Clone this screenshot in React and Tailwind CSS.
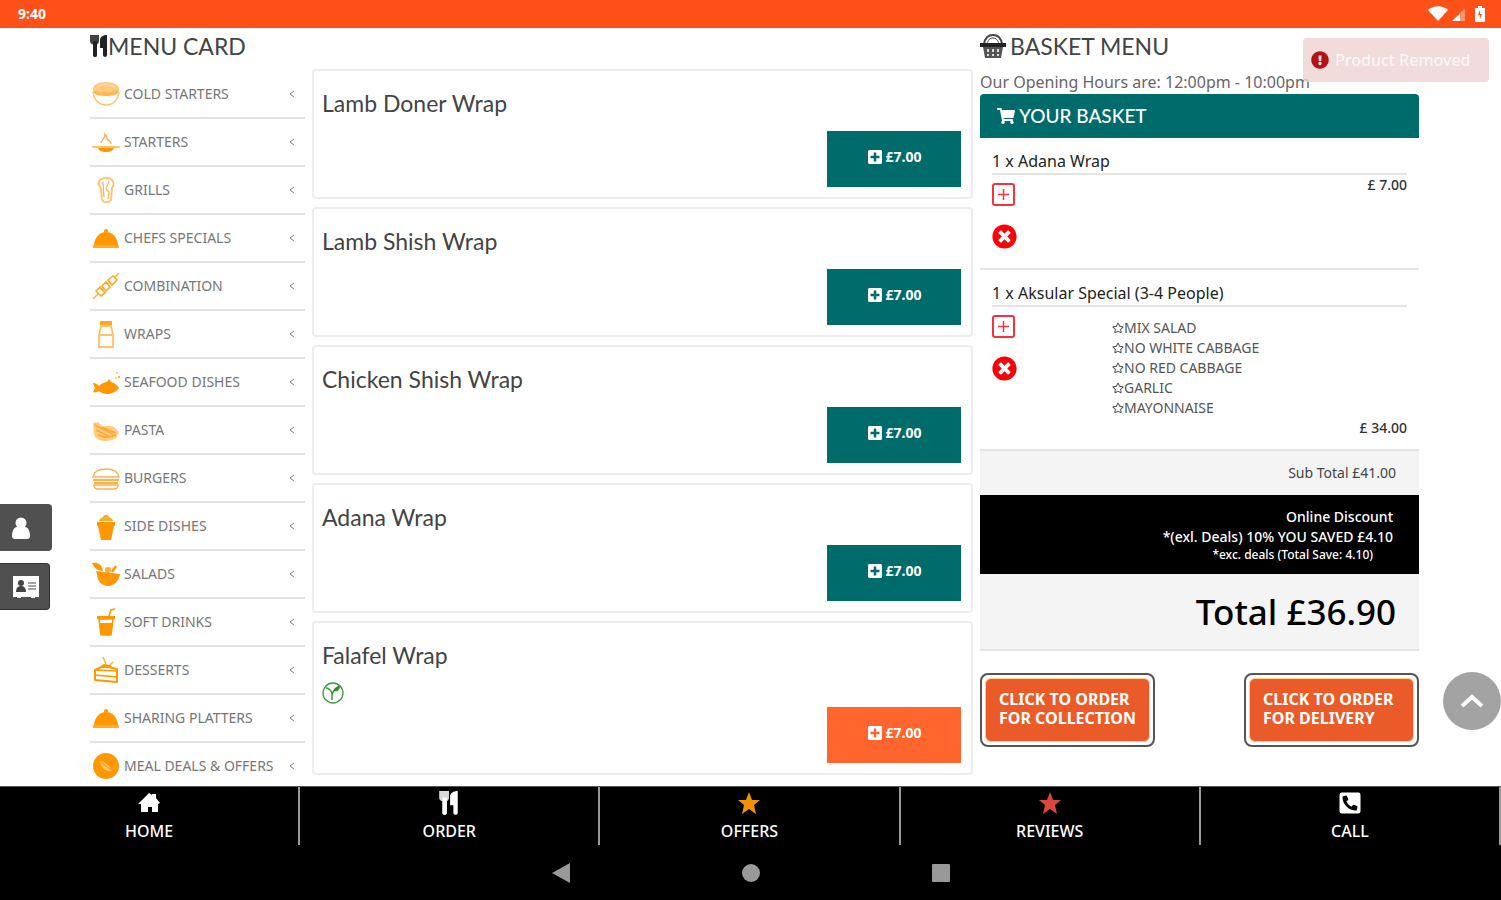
import { useState } from "react";
import {
    FaShoppingCart,
    FaPlusSquare,
    FaTimesCircle,
    FaRegStar,
    FaPhoneSquareAlt,
    FaExclamationCircle
} from "react-icons/fa";

const ORANGE = "#ff9800";
const PALE = "#ffc266";

const foodIcons = {
    bowl: (
        <>
            <path d="M1 9c0-4 5-7 13-7s13 3 13 7v3c-2 4-24 4-26 0z" fill="#ffc980" />
            <path d="M2 10c4 3 20 3 24 0v3c-3 4-21 4-24 0z" fill="#ffb64d" />
            <path d="M1 12c1 8 6 13 13 13s12-5 13-13" fill="none" stroke={PALE} strokeWidth="1.4" />
            <path d="M5 7c4-3 14-3 18 0" fill="none" stroke="#ffe0b3" />
        </>
    ),
    soup: (
        <>
            <path d="M1 19h26" stroke={PALE} strokeWidth="2" strokeLinecap="round" />
            <path d="M6 20h16c-1 3-4 4-8 4s-7-1-8-4z" fill={ORANGE} />
            <path d="M9 15c1-4 4-4 4-9 3 3 1 5 3 6s3 1 3 4" fill="none" stroke="#ffb04d" strokeWidth="1.4" />
        </>
    ),
    grill: (
        <>
            <path d="M8 4c3-3 9-3 12 0 2 2 2 5 0 8l-1 12c-2 3-7 3-9 0L9 12C6 9 6 6 8 4z" fill="none" stroke={PALE} strokeWidth="1.8" />
            <path d="M11 6l1 15M17 5l-3 8 3 3-1 7" fill="none" stroke="#ffb04d" strokeWidth="1.2" />
        </>
    ),
    cloche: (
        <>
            <circle cx="14" cy="7" r="2" fill={ORANGE} />
            <path d="M2 21C3 12 8 8 14 8s11 4 12 13z" fill={ORANGE} />
            <path d="M1 21h26v3H1z" fill="#ffab2e" />
        </>
    ),
    kebab: (
        <>
            <path d="M1 27L27 1" stroke="#ffb04d" strokeWidth="1.4" />
            <path d="M4 19l5 5 4-3-5-6zM10 14l4 5 4-4-4-5zM16 8l4 5 5-5-4-4z" fill="#fff" stroke="#ffa726" strokeWidth="1.6" />
        </>
    ),
    shaker: (
        <>
            <path d="M8 1h12v4H8z" fill="#ffa726" />
            <path d="M9 6h10l2 9v12H7V15z" fill="none" stroke={PALE} strokeWidth="1.8" />
            <path d="M8 15h12" stroke={PALE} strokeWidth="2" />
        </>
    ),
    fish: (
        <>
            <path d="M1 15c3 0 5 2 6 3 3-3 6-4 8-4l2-3 2 3c4 1 7 4 8 6-3 4-8 6-12 6-3 0-6-1-8-3-2 1-4 2-6 1l2-4z" fill={ORANGE} />
            <circle cx="25" cy="5" r="1" fill={PALE} />
            <circle cx="27" cy="9" r="1" fill={ORANGE} />
            <circle cx="24" cy="10" r="1" fill={PALE} />
        </>
    ),
    pasta: (
        <>
            <path d="M1 7l5-1 5 5c7-3 13 0 16 6l-3 5c-6 4-16 4-20 0-3-3-2-7-3-15z" fill="#ffcc80" />
            <path d="M3 9l18 9M4 14l14 7M10 11l14 6M6 19c6 3 12 3 18 0" fill="none" stroke="#ffa733" strokeWidth="1.5" />
        </>
    ),
    burger: (
        <g fill="none" stroke="#ffb04d" strokeWidth="1.5">
            <path d="M1 13c1-6 6-8 13-8s12 2 13 8z" />
            <path d="M1 16h26M2 19h24" strokeWidth="2" />
            <path d="M2 21h24c0 3-2 4-4 4H6c-2 0-4-1-4-4z" />
        </g>
    ),
    cupcake: (
        <>
            <path d="M7 9c0-2 2-3 4-4 1-3 5-3 6 0 2 1 4 2 4 4z" fill="#ffab2e" />
            <path d="M5 10h18v4h-1l-3 14H9L6 14H5z" fill={ORANGE} />
        </>
    ),
    salad: (
        <>
            <path d="M0 3c5-1 10 1 11 8-5 0-9-3-11-8z" fill={ORANGE} />
            <circle cx="16" cy="10" r="3" fill="#ffab2e" />
            <path d="M20 12l4-6" stroke={ORANGE} strokeWidth="2.5" />
            <path d="M4 11l24 3c-1 7-6 12-12 12S5 21 5 14z" fill={ORANGE} />
        </>
    ),
    drink: (
        <>
            <path d="M17 8l2-6 4-1" fill="none" stroke={ORANGE} strokeWidth="1.6" />
            <path d="M5 8h18v3H5z" fill={ORANGE} />
            <path d="M7 11h14l-2 16H9z" fill="#fff" stroke={ORANGE} strokeWidth="1.6" />
            <path d="M7 15h14l-2 12H9z" fill={ORANGE} />
        </>
    ),
    cake: (
        <>
            <path d="M3 14l9-4 13 3v13L3 24z" fill="#fff" stroke={ORANGE} strokeWidth="2" strokeLinejoin="round" />
            <path d="M3 14l22 1M3 19l22 2" stroke={ORANGE} strokeWidth="1.6" />
            <path d="M9 12c0-4 4-5 7-3 2-1 4 1 4 3z" fill={ORANGE} />
            <path d="M14 8l-3-7M18 9l3-3" stroke="#ffab2e" strokeWidth="1.4" />
        </>
    ),
    deals: (
        <>
            <circle cx="14" cy="14" r="13" fill={ORANGE} />
            <path d="M8 9c5 0 9 4 12 10-6 1-11-3-12-10z" fill={PALE} />
            <path d="M9 10l10 8" stroke={ORANGE} />
        </>
    )
};

const categories = [
    { name: "COLD STARTERS", icon: "bowl" },
    { name: "STARTERS", icon: "soup" },
    { name: "GRILLS", icon: "grill" },
    { name: "CHEFS SPECIALS", icon: "cloche" },
    { name: "COMBINATION", icon: "kebab" },
    { name: "WRAPS", icon: "shaker" },
    { name: "SEAFOOD DISHES", icon: "fish" },
    { name: "PASTA", icon: "pasta" },
    { name: "BURGERS", icon: "burger" },
    { name: "SIDE DISHES", icon: "cupcake" },
    { name: "SALADS", icon: "salad" },
    { name: "SOFT DRINKS", icon: "drink" },
    { name: "DESSERTS", icon: "cake" },
    { name: "SHARING PLATTERS", icon: "cloche" },
    { name: "MEAL DEALS & OFFERS", icon: "deals" }
];

const products = [
    { name: "Lamb Doner Wrap", price: "7.00" },
    { name: "Lamb Shish Wrap", price: "7.00" },
    { name: "Chicken Shish Wrap", price: "7.00" },
    { name: "Adana Wrap", price: "7.00" },
    { name: "Falafel Wrap", price: "7.00", vegetarian: true, active: true }
];

const basket = [
    { name: "Adana Wrap", qty: 1, price: "7.00", extras: [] },
    {
        name: "Aksular Special (3-4 People)",
        qty: 1,
        price: "34.00",
        extras: ["MIX SALAD", "NO WHITE CABBAGE", "NO RED CABBAGE", "GARLIC", "MAYONNAISE"]
    }
];

function Cutlery({ className }) {
    return (
        <svg className={className} viewBox="0 0 18 22" fill="currentColor" aria-hidden="true">
            <path d="M0 0h9v6c0 2-1 3-2 3.500V20c0 2.500-4 2.500-4 0V9.500C1 9 0 8 0 6z" opacity=".85" />
            <path d="M3 6h4v14c0 2.500-4 2.500-4 0z" />
            <path d="M17 0v20c0 2.500-4 2.500-4 0v-7h-3V5c0-3 3-5 7-5z" />
        </svg>
    );
}

function BasketIcon() {
    return (
        <svg className="h-6 w-[26px]" viewBox="0 0 26 24" fill="none" stroke="#444" aria-hidden="true">
            <path d="M4 10C5 4 8 1 13 1s8 3 9 9" strokeWidth="2" />
            <path d="M7 10c1-4 3-6 6-6s5 2 6 6" strokeWidth="1" />
            <path d="M0 9h26v4H0z" fill="#222" stroke="none" />
            <path d="M3 13h20l-2 11H5z" fill="#555" stroke="none" />
            <path d="M8 15v3M8 20v2M13 15v3M13 20v2M18 15v3M18 20v2" stroke="#ddd" strokeWidth="2" />
        </svg>
    );
}

function Star({ className }) {
    return (
        <svg className={className} viewBox="0 0 22 22" fill="currentColor" aria-hidden="true">
            <path d="M11 0l3 8h8l-6 5 2 9-7-5-7 5 2-9-6-5h8z" />
        </svg>
    );
}

function House({ className }) {
    return (
        <svg className={className} viewBox="0 0 22 20" fill="currentColor" aria-hidden="true">
            <path d="M11 0l3 2V1h4v4l4 5-2 1v8h-6v-5h-4v5H3v-8H0z" />
        </svg>
    );
}

function StatusBar() {
    return (
        <header className="flex h-7 shrink-0 items-center justify-between bg-[#ff5018] pr-[15px] pl-[18px] text-white">
            <span className="text-sm font-bold">9:40</span>
            <div className="flex items-center gap-1">
                <svg className="h-4 w-5" viewBox="0 0 20 16" fill="currentColor">
                    <path d="M0 4c6-5 14-5 20 0L10 15z" />
                </svg>
                <svg className="h-4 w-3.5" viewBox="0 0 14 16" fill="currentColor">
                    <path d="M13 2v13H0z" opacity=".4" />
                    <path d="M8 8v7H0z" />
                </svg>
                <svg className="ml-1 h-4 w-3" viewBox="0 0 12 16" fill="currentColor">
                    <path d="M4 0h4v2h3v14H1V2h3z" />
                    <path d="M6 4L4 9h2v4l2-5H6z" fill="#ff5018" />
                </svg>
            </div>
        </header>
    );
}

function CategoryList() {
    return (
        <ul className="mt-[7px]">
            {categories.map((category) => (
                <li key={category.name} className="h-12 border-b-2 border-[#e2e2e2] last:border-0">
                    <a href="#" className="flex h-[46px] items-center gap-1 pr-2.5 pl-0.5 text-sm text-[#777]">
                        <svg className="size-7 shrink-0" viewBox="0 0 28 28" aria-hidden="true">
                            {foodIcons[category.icon]}
                        </svg>
                        <span className="flex-1 whitespace-nowrap">{category.name}</span>
                        <svg className="h-2 w-1.5" viewBox="0 0 6 8" fill="none" stroke="#888">
                            <path d="M5 1L1 4l4 3" />
                        </svg>
                    </a>
                </li>
            ))}
        </ul>
    );
}

function ProductCard({ product }) {
    return (
        <article
            className={`flex flex-col rounded border-2 border-[#ededed] pt-[17px] pr-2.5 pb-2.5 pl-2 ${
                product.vegetarian ? "min-h-[154px]" : "min-h-[130px]"
            }`}
        >
            <h2 className="font-['Lato'] text-[23px] leading-[30px] text-[#444]">{product.name}</h2>
            {product.vegetarian && (
                <svg className="mt-3 size-[22px]" viewBox="0 0 22 22" fill="none" stroke="#3c9a3c" aria-label="Vegetarian">
                    <circle cx="11" cy="11" r="10" strokeWidth="1.3" />
                    <path d="M4 6c3 0 6 3 6 7v5M10 13c1-4 3-7 7-8" strokeWidth="1.5" />
                    <path d="M12 9c0-3 3-5 6-5 0 4-3 6-6 5z" fill="#2e8b2e" stroke="none" />
                </svg>
            )}
            <button
                className={`mt-auto flex h-14 w-[134px] items-center justify-center gap-[3px] self-end pb-1 text-sm font-bold text-white ${
                    product.active ? "bg-[#ff652d]" : "bg-[#006b6b]"
                }`}
            >
                <FaPlusSquare className="size-4" />£{product.price}
            </button>
        </article>
    );
}

function BasketItem({ item }) {
    return (
        <li className="border-b-2 border-[#e4e4e4] px-3 pt-[11px]">
            <h3 className="border-b-2 border-[#e4e4e4] text-base leading-6 text-[#222]">
                {item.qty} x {item.name}
            </h3>
            <div className="flex">
                <div className="flex w-[120px] flex-col items-start gap-[18px] pt-2 pb-[19px]">
                    <button aria-label="Add one" className="size-[23px]">
                        <svg viewBox="0 0 23 23" fill="none" stroke="#f5333f">
                            <rect x="1" y="1" width="21" height="21" rx="2" strokeWidth="2" />
                            <path d="M11.500 6v11M6 11.500h11" strokeWidth="1.5" />
                        </svg>
                    </button>
                    <button aria-label="Remove" className="text-[#fb0007]">
                        <FaTimesCircle className="size-[25px]" />
                    </button>
                </div>
                <div className="flex-1 text-sm leading-5 text-[#333]">
                    {item.extras.length > 0 && (
                        <ul className="pt-[11px] text-[#555]">
                            {item.extras.map((extra) => (
                                <li key={extra} className="flex items-center">
                                    <FaRegStar className="size-3" />
                                    {extra}
                                </li>
                            ))}
                        </ul>
                    )}
                    <p className="pb-[11px] text-right font-medium">£ {item.price}</p>
                </div>
            </div>
        </li>
    );
}

function OrderButton({ type }) {
    return (
        <button className="w-[175px] rounded-lg border-2 border-[#555] bg-white p-[3px] text-left">
            <span className="block rounded-md border border-[#ffd08a] bg-[#eb5b2a] px-[13px] pt-[11px] pb-[13px] text-base leading-[19px] font-bold whitespace-nowrap text-white">
                CLICK TO ORDER
                <br />
                FOR {type}
            </span>
        </button>
    );
}

function Basket() {
    return (
        <>
            <p className="mt-1.5 text-base leading-6 whitespace-nowrap text-[#666]">
                Our Opening Hours are: 12:00pm - 10:00pm
            </p>
            <h2 className="flex h-11 items-center gap-1 rounded-t bg-[#006b6b] px-[17px] font-['Lato'] text-[19px] font-medium text-white">
                <FaShoppingCart className="size-[18px]" />
                YOUR BASKET
            </h2>
            <ul>
                {basket.map((item) => (
                    <BasketItem key={item.name} item={item} />
                ))}
            </ul>
            <p className="bg-[#f4f4f4] px-[23px] text-right text-sm leading-[44px] text-[#444]">Sub Total £41.00</p>
            <div className="bg-black px-[26px] pt-3 pb-[11px] text-right text-sm leading-5 font-medium text-white">
                <p>Online Discount</p>
                <p>*(exl. Deals) 10% YOU SAVED £4.10</p>
                <p className="pr-5 text-xs leading-4">*exc. deals (Total Save: 4.10)</p>
            </div>
            <p className="border-b-2 border-[#e4e4e4] bg-[#f4f4f4] px-[23px] text-right text-[35px] leading-[75px] font-medium text-black">
                Total £36.90
            </p>
            <div className="mt-[22px] flex justify-between">
                <OrderButton type="COLLECTION" />
                <OrderButton type="DELIVERY" />
            </div>
        </>
    );
}

const navItems = [
    { label: "HOME", icon: <House className="h-5 w-[22px]" /> },
    { label: "ORDER", icon: <Cutlery className="h-6 w-5" /> },
    { label: "OFFERS", icon: <Star className="size-[22px] text-[#f39200]" /> },
    { label: "REVIEWS", icon: <Star className="size-[22px] text-[#d9483b]" /> },
    { label: "CALL", icon: <FaPhoneSquareAlt className="size-6" /> }
];

function BottomNav() {
    return (
        <nav className="grid h-[59px] shrink-0 grid-cols-5 border-t border-[#555] bg-black">
            {navItems.map((item) => (
                <a
                    key={item.label}
                    href="#"
                    className="flex flex-col items-center border-r-2 border-[#999] pt-1 text-base font-medium text-white"
                >
                    <span className="flex h-6 items-center">{item.icon}</span>
                    <span className="mt-1 leading-6">{item.label}</span>
                </a>
            ))}
        </nav>
    );
}

function SystemBar() {
    return (
        <div className="flex h-[55px] shrink-0 items-center justify-center gap-[170px] bg-black">
            <button aria-label="Back">
                <svg className="size-5" viewBox="0 0 20 20" fill="#999">
                    <path d="M1 10L19 0v20z" />
                </svg>
            </button>
            <button aria-label="Home" className="flex size-5 items-center justify-center">
                <span className="size-[18px] rounded-full bg-[#999]" />
            </button>
            <button aria-label="Recent apps" className="flex size-5 items-center justify-center">
                <span className="size-[18px] rounded-[1px] bg-[#999]" />
            </button>
        </div>
    );
}

function App() {
    const [toast] = useState("Product Removed");

    return (
        <div className="relative flex h-screen flex-col bg-white font-['Noto_Sans',sans-serif]">
            <StatusBar />

            <main className="grid min-h-0 flex-1 grid-cols-[215fr_661fr_439fr] gap-[7px] overflow-y-auto pr-[82px] pl-[90px] [scrollbar-width:none]">
                <aside className="min-w-0">
                    <h1 className="flex h-9 items-center font-['Lato'] text-[23px] text-[#444]">
                        <Cutlery className="h-[22px] w-[18px] text-[#222]" />
                        MENU CARD
                    </h1>
                    <CategoryList />
                </aside>

                <section className="flex min-w-0 flex-col gap-2 pt-[41px]">
                    {products.map((product) => (
                        <ProductCard key={product.name} product={product} />
                    ))}
                </section>

                <section className="min-w-0">
                    <h1 className="flex h-9 items-center gap-1 font-['Lato'] text-[23px] text-[#444]">
                        <BasketIcon />
                        BASKET MENU
                    </h1>
                    <Basket />
                </section>
            </main>

            <BottomNav />
            <SystemBar />

            {toast && (
                <div
                    role="alert"
                    className="absolute top-[38px] right-3 flex h-11 w-[186px] items-center gap-1.5 rounded bg-[#efd5d5]/85 px-2 text-base font-medium whitespace-nowrap text-[#fdf6f6]"
                >
                    <FaExclamationCircle className="size-[18px] shrink-0 text-[#b31217]" />
                    {toast}
                </div>
            )}

            <div className="absolute bottom-[290px] left-0 flex flex-col gap-3">
                <button
                    aria-label="My account"
                    className="flex h-[47px] w-[52px] items-center rounded-r bg-[#505050] pl-3 text-white"
                >
                    <svg className="h-[22px] w-[18px]" viewBox="0 0 18 22" fill="currentColor">
                        <circle cx="9" cy="6" r="5.5" />
                        <path d="M0 19c0-5 2-9 5-9h8c3 0 5 4 5 9 0 2-1 3-3 3H3c-2 0-3-1-3-3z" />
                    </svg>
                </button>
                <button
                    aria-label="Contact details"
                    className="flex h-[47px] w-[50px] items-center rounded-r border border-l-0 border-[#333] bg-[#505050] pl-3 text-white"
                >
                    <svg className="h-[22px] w-7" viewBox="0 0 28 22">
                        <path d="M1 0h26v21h-4v1h-4v-1H9v1H5v-1H1z" fill="#fff" />
                        <circle cx="9" cy="7" r="3" fill="#444" />
                        <path d="M4 16c0-4 2-6 5-6s5 2 5 6z" fill="#444" />
                        <path d="M16 7h8M16 10h8M16 13h8" stroke="#888" strokeWidth="1.5" />
                    </svg>
                </button>
            </div>

            <button
                aria-label="Back to top"
                className="absolute right-0 bottom-[170px] flex size-[58px] items-center justify-center rounded-full bg-[#a3a3a3]"
            >
                <svg className="h-4 w-6" viewBox="0 0 24 16" fill="none" stroke="#fff" strokeWidth="4">
                    <path d="M2 13l10-9 10 9" />
                </svg>
            </button>
        </div>
    );
}

export default App;
